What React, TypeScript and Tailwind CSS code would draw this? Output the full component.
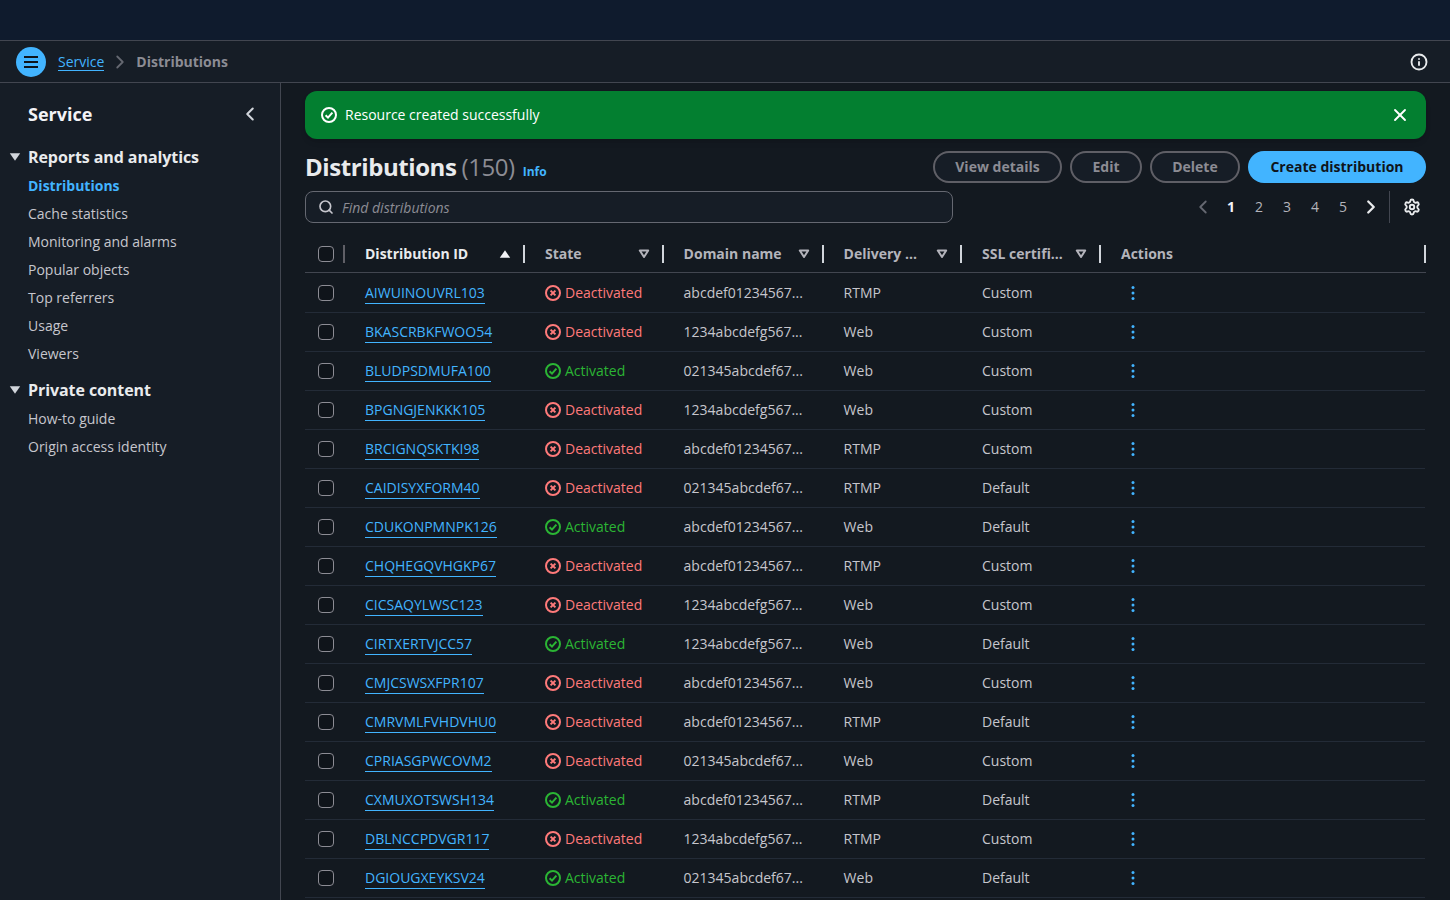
import { ChevronLeft, ChevronRight, Info, Search, Settings, X } from "lucide-react";

type Row = [string, boolean, string, string, string];

const rows: Row[] = [
  ["AIWUINOUVRL103", false, "abcdef01234567...", "RTMP", "Custom"],
  ["BKASCRBKFWOO54", false, "1234abcdefg567...", "Web", "Custom"],
  ["BLUDPSDMUFA100", true, "021345abcdef67...", "Web", "Custom"],
  ["BPGNGJENKKK105", false, "1234abcdefg567...", "Web", "Custom"],
  ["BRCIGNQSKTKI98", false, "abcdef01234567...", "RTMP", "Custom"],
  ["CAIDISYXFORM40", false, "021345abcdef67...", "RTMP", "Default"],
  ["CDUKONPMNPK126", true, "abcdef01234567...", "Web", "Default"],
  ["CHQHEGQVHGKP67", false, "abcdef01234567...", "RTMP", "Custom"],
  ["CICSAQYLWSC123", false, "1234abcdefg567...", "Web", "Custom"],
  ["CIRTXERTVJCC57", true, "1234abcdefg567...", "Web", "Default"],
  ["CMJCSWSXFPR107", false, "abcdef01234567...", "Web", "Custom"],
  ["CMRVMLFVHDVHU0", false, "abcdef01234567...", "RTMP", "Default"],
  ["CPRIASGPWCOVM2", false, "021345abcdef67...", "Web", "Custom"],
  ["CXMUXOTSWSH134", true, "abcdef01234567...", "RTMP", "Default"],
  ["DBLNCCPDVGR117", false, "1234abcdefg567...", "RTMP", "Custom"],
  ["DGIOUGXEYKSV24", true, "021345abcdef67...", "Web", "Default"],
];

const reports = ["Cache statistics", "Monitoring and alarms", "Popular objects", "Top referrers", "Usage", "Viewers"];
const gridCols = "grid grid-cols-[40px_180px_138.6px_160px_138.4px_139px_1fr]";

function Checkbox() {
  return <span className="block h-4 w-4 rounded-[4px] border-[1.5px] border-[#8c8c94] bg-[#0f141a]" />;
}

function Caret({ className, up }: { className?: string; up?: boolean }) {
  return (
    <svg viewBox="0 0 12 10" className={`h-[10px] w-3 ${className ?? ""}`}>
      <path d={up ? "M.8 8.8h10.4L6 1.2z" : "M.8 1.2h10.4L6 8.8z"} fill="currentColor" />
    </svg>
  );
}

function FilterCaret() {
  return (
    <svg viewBox="0 0 12 10" className="h-[10px] w-3 text-[#b4b4bb]">
      <path d="M1.8 1.5h8.4L6 8z" fill="none" stroke="currentColor" strokeWidth="2" strokeLinejoin="round" />
    </svg>
  );
}

function StatusIcon({ ok }: { ok: boolean }) {
  return (
    <svg viewBox="0 0 16 16" fill="none" stroke="currentColor" strokeWidth="2" className="h-4 w-4 shrink-0">
      <circle cx="8" cy="8" r="7" />
      {ok ? <path d="M4.6 8.2 7 10.6l4.4-5" /> : <path d="m5.6 5.6 4.8 4.8m0-4.8-4.8 4.8" />}
    </svg>
  );
}

function HeaderCell({ label, sorted, last }: { label: string; sorted?: boolean; last?: boolean }) {
  return (
    <div className="relative flex h-full items-center pl-5 pr-[14px]">
      <span className={`flex-1 font-bold ${sorted ? "text-[#e9ebed]" : "text-[#b4b4bb]"}`}>{label}</span>
      {last ? null : sorted ? <Caret up className="text-[#f3f3f7]" /> : <FilterCaret />}
      <span className="absolute right-0 top-[10px] h-[18px] w-[2px] bg-[#d1d5db]" />
    </div>
  );
}

function PillButton({ label, className }: { label: string; className: string }) {
  return (
    <button
      type="button"
      className={`h-8 rounded-full border-2 border-[#5f5f66] bg-[#161d26] text-sm font-bold text-[#8c8c94] ${className}`}
    >
      {label}
    </button>
  );
}

export default function App() {
  return (
    <div className="h-[900px] overflow-hidden bg-[#131920] font-['Open_Sans',sans-serif] text-sm text-[#c6c6cd]">
      <div className="h-[41px] border-b border-[#424650] bg-[#0f1b2d]" />

      <div className="flex h-[42px] items-center border-b border-[#424650] bg-[#161d26] pl-4 pr-[23px]">
        <button type="button" className="flex h-[30px] w-[30px] items-center justify-center rounded-full bg-[#42b4ff] text-[#0f141a]">
          <svg viewBox="0 0 16 16" className="h-4 w-4" stroke="currentColor" strokeWidth="2" fill="none">
            <path d="M1 3h14M1 8h14M1 13h14" />
          </svg>
        </button>
        <span className="ml-3 border-b border-[#42b4ff] leading-[17px] text-[#42b4ff]">Service</span>
        <ChevronRight size={22} strokeWidth={2} className="ml-[5px] text-[#656871]" />
        <span className="ml-[5px] font-bold text-[#8c8c94]">Distributions</span>
        <Info size={18} strokeWidth={2.5} className="ml-auto -mr-px text-[#e9ebed]" />
      </div>

      <div className="flex h-[817px]">
        <aside className="w-[281px] shrink-0 border-r border-[#424650] bg-[#161d26]">
          <div className="flex items-center justify-between pl-7 pr-[19px] pt-[17px]">
            <h1 className="text-lg font-bold leading-7 text-[#f3f3f7]">Service</h1>
            <ChevronLeft size={22} strokeWidth={2.25} className="text-[#d1d5db]" />
          </div>
          <div className="mt-[15px] flex h-7 items-center pl-[9px] font-bold">
            <Caret className="text-[#d1d5db]" />
            <span className="ml-[7px] text-base tracking-[-0.005em] text-[#e9ebed]">Reports and analytics</span>
          </div>
          <ul className="mt-px pl-7">
            <li className="flex h-7 items-center font-bold text-[#42b4ff]">Distributions</li>
            {reports.map((item) => (
              <li key={item} className="flex h-7 items-center">{item}</li>
            ))}
          </ul>
          <div className="mt-2 flex h-7 items-center pl-[9px] font-bold">
            <Caret className="text-[#d1d5db]" />
            <span className="ml-[7px] text-base tracking-[-0.005em] text-[#e9ebed]">Private content</span>
          </div>
          <ul className="mt-px pl-7">
            <li className="flex h-7 items-center">How-to guide</li>
            <li className="flex h-7 items-center">Origin access identity</li>
          </ul>
        </aside>

        <main className="min-w-0 flex-1 pl-6 pr-6 pt-2">
          <div className="flex h-12 items-center rounded-xl bg-[#037f30] pl-4 pr-4 text-white shadow-md">
            <StatusIcon ok />
            <span className="ml-2 flex-1">Resource created successfully</span>
            <X size={20} strokeWidth={2.25} />
          </div>

          <div className="mt-3 flex h-8 items-start justify-between">
            <div className="-mt-px flex items-baseline tracking-[-0.03em]">
              <h2 className="text-2xl font-bold leading-[34px] text-[#e9ebed]">Distributions</h2>
              <span className="ml-[5px] text-2xl leading-[34px] text-[#8c8c94]">(150)</span>
              <span className="ml-2 text-xs font-bold tracking-normal text-[#42b4ff]">Info</span>
            </div>
            <div className="flex gap-[8.3px]">
              <PillButton label="View details" className="w-[128.7px]" />
              <PillButton label="Edit" className="w-[71.7px]" />
              <PillButton label="Delete" className="w-[89.6px]" />
              <button type="button" className="h-8 w-[178px] rounded-full bg-[#42b4ff] text-sm font-bold text-[#0f141a]">
                Create distribution
              </button>
            </div>
          </div>

          <div className="mt-2 flex items-center">
            <div className="flex h-8 w-[648px] items-center rounded-lg border border-[#656871] bg-[#161d26] pl-3">
              <Search size={16} strokeWidth={2.5} className="text-[#c6c6cd]" />
              <span className="ml-2 pt-[2px] italic text-[#8c8c94]">Find distributions</span>
            </div>
            <div className="ml-auto flex h-8 items-center">
              <ChevronLeft size={22} strokeWidth={2} className="-ml-px text-[#656871]" />
              <div className="ml-[3px] flex">
                {[1, 2, 3, 4, 5].map((page) => (
                  <span key={page} className={`w-7 text-center ${page === 1 ? "font-bold text-[#f3f3f7]" : "text-[#b4b4bb]"}`}>
                    {page}
                  </span>
                ))}
              </div>
              <ChevronRight size={22} strokeWidth={2.5} className="ml-[3px] text-[#e9ebed]" />
              <span className="ml-[7px] h-8 w-px bg-[#424650]" />
              <Settings size={18} strokeWidth={2.5} className="ml-[13px] mr-[5px] text-[#e9ebed]" />
            </div>
          </div>

          <div className={`${gridCols} mt-3 h-[38px] items-center border-b border-[#424650]`}>
            <div className="relative flex h-full items-center pl-[13px]">
              <Checkbox />
              <span className="absolute right-0 top-[10px] h-[18px] w-[2px] bg-[#5f5f66]" />
            </div>
            <HeaderCell label="Distribution ID" sorted />
            <HeaderCell label="State" />
            <HeaderCell label="Domain name" />
            <HeaderCell label="Delivery ..." />
            <HeaderCell label="SSL certifi..." />
            <HeaderCell label="Actions" last />
          </div>

          <div className="pt-px pr-px">
            {rows.map(([id, ok, domain, delivery, ssl]) => (
              <div key={id} className={`${gridCols} h-[39px] items-center border-b border-[#232b37]`}>
                <div className="pl-[13px]">
                  <Checkbox />
                </div>
                <div className="pl-5">
                  <span className="border-b border-[#42b4ff] pb-[1px] text-[#42b4ff]">{id}</span>
                </div>
                <div className={`flex items-center gap-1 pl-5 ${ok ? "text-[#2bb534]" : "text-[#ff7a7a]"}`}>
                  <StatusIcon ok={ok} />
                  <span>{ok ? "Activated" : "Deactivated"}</span>
                </div>
                <div className="pl-5">{domain}</div>
                <div className="pl-5">{delivery}</div>
                <div className="pl-5">{ssl}</div>
                <div className="pl-5">
                  <svg viewBox="0 0 16 16" className="ml-1 h-4 w-4 text-[#42b4ff]" fill="currentColor">
                    <circle cx="8" cy="2.5" r="1.5" />
                    <circle cx="8" cy="8" r="1.5" />
                    <circle cx="8" cy="13.5" r="1.5" />
                  </svg>
                </div>
              </div>
            ))}
          </div>
        </main>
      </div>
    </div>
  );
}
